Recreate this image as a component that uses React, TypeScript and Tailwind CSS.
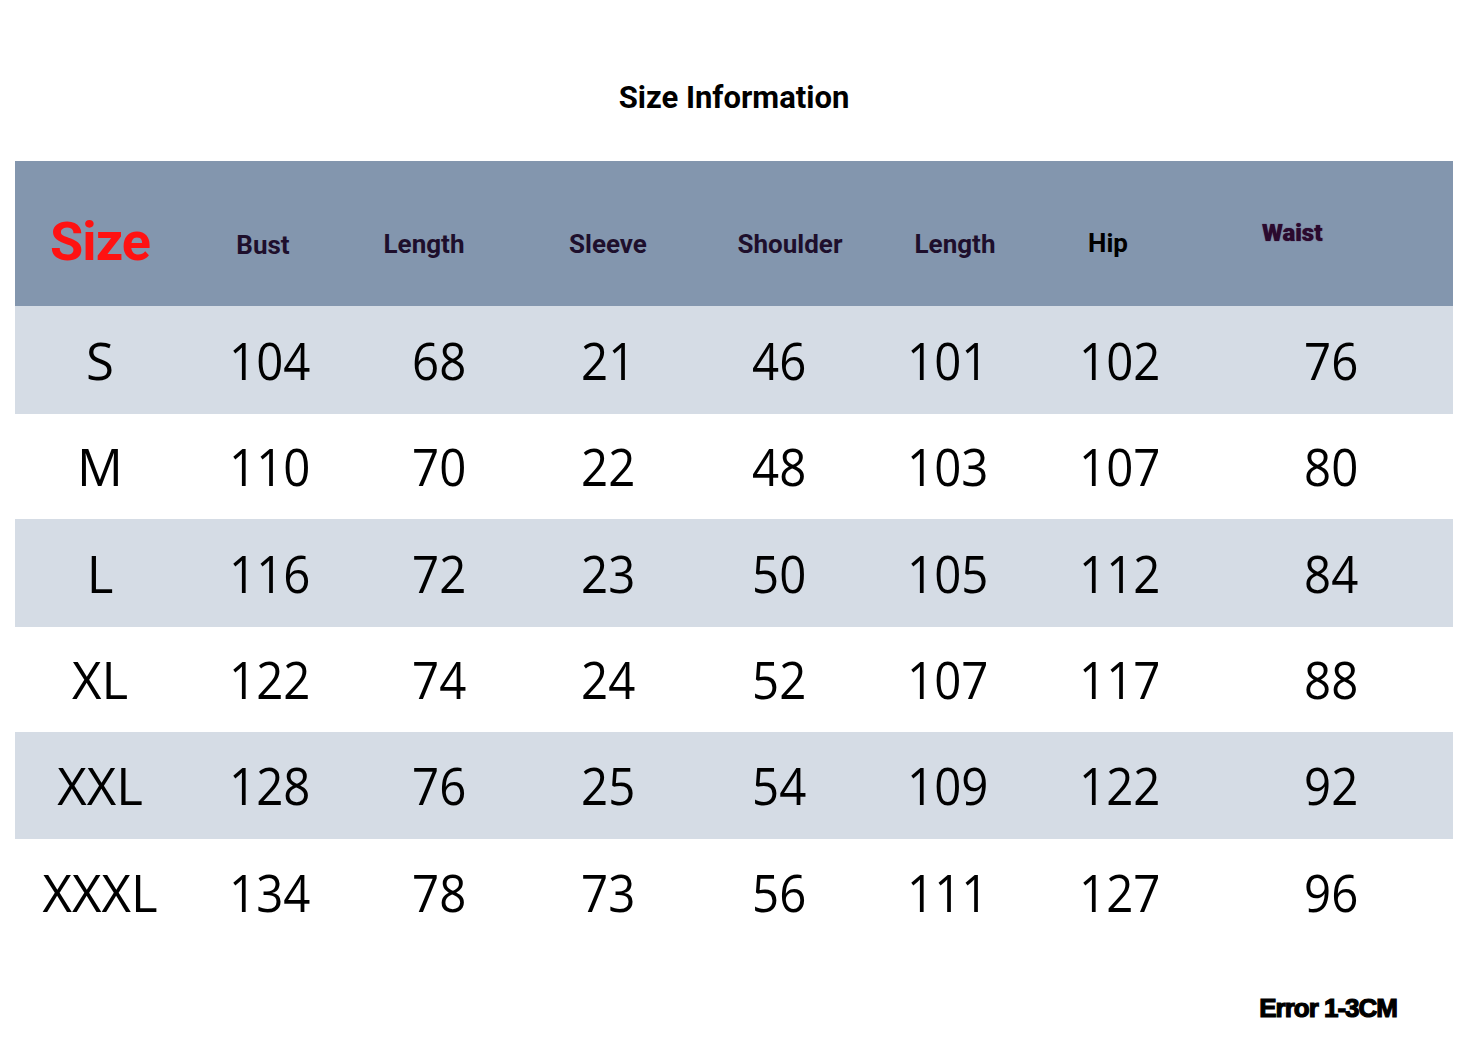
const rows = [
  { size: "S", values: ["104", "68", "21", "46", "101", "102", "76"], h: "h-[108px]", bg: "bg-[#d5dce5]" },
  { size: "M", values: ["110", "70", "22", "48", "103", "107", "80"], h: "h-[105px]", bg: "bg-white" },
  { size: "L", values: ["116", "72", "23", "50", "105", "112", "84"], h: "h-[108px]", bg: "bg-[#d5dce5]" },
  { size: "XL", values: ["122", "74", "24", "52", "107", "117", "88"], h: "h-[105px]", bg: "bg-white" },
  { size: "XXL", values: ["128", "76", "25", "54", "109", "122", "92"], h: "h-[107px]", bg: "bg-[#d5dce5]" },
  { size: "XXXL", values: ["134", "78", "73", "56", "111", "127", "96"], h: "h-[106px]", bg: "bg-white" },
]

const cols = "grid grid-cols-[170px_170px_168px_170px_172px_166px_178px_1fr]"

export default function App() {
  return (
    <div className="w-[1468px] h-[1038px] bg-white flex flex-col">
      <h1 className="h-[161px] flex items-center justify-center pt-[36px] font-['Roboto',sans-serif] font-bold text-[31px] text-black">
        Size Information
      </h1>

      <div className="mx-[15px] flex flex-col">
        {/* header */}
        <div className={`${cols} h-[145px] bg-[#8396ae] items-center font-['Roboto',sans-serif] font-bold`}>
          <div className="text-center text-[54px] text-[#ff1212] tracking-[-1px] pt-[16px]">Size</div>
          <div className="text-center text-[26px] text-[#1e0f2c] pr-[14px] pt-[24px]">Bust</div>
          <div className="text-center text-[26px] text-[#1e0f2c] pr-[30px] pt-[22px]">Length</div>
          <div className="text-center text-[26px] text-[#1e0f2c] pt-[22px]">Sleeve</div>
          <div className="text-center text-[26px] text-[#1e0f2c] pl-[22px] pt-[22px]">Shoulder</div>
          <div className="text-center text-[26px] text-[#1e0f2c] pl-[14px] pt-[22px]">Length</div>
          <div className="text-center text-[26px] text-black pr-[24px] pt-[20px]">Hip</div>
          <div className="text-[24px] font-black text-[#2b0a2e] pl-[53px] pb-[2px] [text-shadow:0_0_1px_#3a0a3a]">Waist</div>
        </div>

        {rows.map((r) => (
          <div
            key={r.size}
            className={`${cols} ${r.h} ${r.bg} items-center font-['Open_Sans',sans-serif] text-[51px] text-black`}
          >
            <div className="text-center">{r.size}</div>
            {r.values.map((v, i) => (
              <div key={i} className="text-center">
                <span className="inline-block scale-x-[0.93]">{v}</span>
              </div>
            ))}
          </div>
        ))}
      </div>

      <div className="flex-1 flex items-start justify-end pr-[71px] pt-[48px]">
        <span className="font-['Liberation_Sans',sans-serif] font-bold text-[26px] leading-[30px] tracking-[-1px] text-black [-webkit-text-stroke:1.2px_black]">
          Error 1-3CM
        </span>
      </div>
    </div>
  )
}
